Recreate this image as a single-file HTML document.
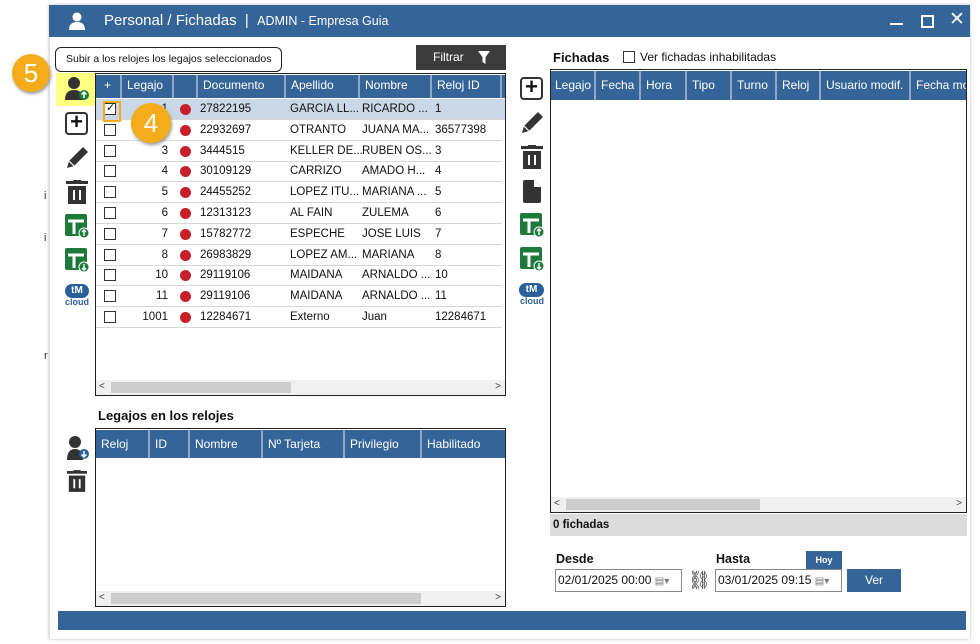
<!DOCTYPE html>
<html><head><meta charset="utf-8"><style>
*{margin:0;padding:0;box-sizing:border-box}
body{width:980px;height:644px;background:#fff;font-family:"Liberation Sans",sans-serif;font-size:12px;color:#111;position:relative;overflow:hidden}
.a{position:absolute}
.win{left:49px;top:5px;width:921px;height:634px;background:#fff;box-shadow:0 0 3px #bbb;border-left:1px solid #ddd}
.title{left:49px;top:5px;width:921px;height:32px;background:#346498;color:#fff}
.hd{background:#346498;color:#fff;height:100%;display:flex}
.hd div{border-right:2px solid #8fa9c6;padding-left:5px;line-height:21px;white-space:nowrap;overflow:hidden}
.row{position:absolute;left:0;height:21px;width:406px;border-bottom:1px solid #d8d8d8;font-size:11.5px}
.row span{position:absolute;top:4px;white-space:nowrap}
.cb{position:absolute;left:8px;top:4px;width:12px;height:12px;border:1px solid #333;background:#fff}
.dot{position:absolute;left:84px;top:5px;width:11px;height:11px;border-radius:50%;background:#c8202a}
.sb{position:absolute;height:15px;background:#f0f0f0;font-size:10px;color:#444}
.circ{border-radius:50%;background:#f5ac1b;color:#fff;font-size:26px;text-align:center;box-shadow:1px 2px 3px #999}
</style></head><body>
<div class="a" style="left:44px;top:190px;font-size:11px;color:#333">i</div>
<div class="a" style="left:44px;top:232px;font-size:11px;color:#333">i</div>
<div class="a" style="left:44px;top:350px;font-size:11px;color:#333">r</div>
<div class="a win"></div>
<div class="a title">
 <svg class="a" style="left:19px;top:7px" width="18" height="18" viewBox="0 0 18 18"><circle cx="9" cy="5" r="4.5" fill="#fff"/><path d="M1 18 Q1 10 9 10 Q17 10 17 18Z" fill="#fff"/></svg>
 <div class="a" style="left:55px;top:7px;font-size:15px">Personal / Fichadas &nbsp;|&nbsp; <span style="font-size:12.5px">ADMIN - Empresa Guia</span></div>
 <div class="a" style="left:841px;top:18px;width:13px;height:2px;background:#fff"></div>
 <div class="a" style="left:872px;top:10px;width:13px;height:13px;border:2px solid #fff"></div>
 <div class="a" style="left:900px;top:3px;font-size:19px;color:#fff">✕</div>
</div>
<div class="a" style="left:55px;top:47px;width:227px;height:25px;border:1px solid #222;border-radius:6px;background:#fff;font-size:10.5px;line-height:23px;padding-left:10px;white-space:nowrap;overflow:hidden">Subir a los relojes los legajos seleccionados</div>
<div class="a" style="left:416px;top:45px;width:90px;height:25px;background:#3c3c3c;color:#fff;font-size:12px;line-height:25px;padding-left:17px">Filtrar <svg style="position:absolute;left:62px;top:6px" width="12" height="13" viewBox="0 0 12 13"><path d="M0 0H12L7.5 6V13L4.5 11V6Z" fill="#fff"/></svg></div>
<div class="a circ" style="left:12px;top:54px;width:38px;height:38px;line-height:38px">5</div>
<div class="a" style="left:56px;top:73px;width:42px;height:33px;background:#ffff80"></div>
<svg class="a" style="left:64px;top:74px" width="26" height="28" viewBox="0 0 26 28"><circle cx="10" cy="9" r="6" fill="#333"/><path d="M1 26 Q1 16 10 16 Q19 16 19 26Z" fill="#333"/><circle cx="20" cy="21" r="5" fill="#1e7a3a"/><path d="M20 24v-6M17.5 20.5l2.5-2.5 2.5 2.5" stroke="#fff" stroke-width="1.5" fill="none"/></svg>
<div class="a" style="left:65px;top:112px;width:23px;height:23px;border:2.5px solid #333;border-radius:4px;font-size:22px;line-height:16px;text-align:center;font-weight:bold">+</div>
<svg class="a" style="left:64px;top:145px" width="26" height="26" viewBox="0 0 26 26"><path d="M3 23l2-7 14-14 5 5-14 14z" fill="#333"/><path d="M5 16l5 5" stroke="#fff" stroke-width="1.2"/></svg>
<svg class="a" style="left:66px;top:180px" width="22" height="24" viewBox="0 0 22 24"><rect x="0" y="1" width="22" height="3" fill="#333"/><rect x="7" y="0" width="8" height="2" fill="#333"/><rect x="2" y="6" width="18" height="18" fill="#333"/><rect x="7" y="10" width="2" height="10" fill="#fff"/><rect x="13" y="10" width="2" height="10" fill="#fff"/></svg>
<svg class="a" style="left:65px;top:214px" width="25" height="25" viewBox="0 0 25 25"><rect x="0" y="0" width="22" height="22" rx="2" fill="#1e7a3a"/><path d="M3 7H19M9 7V20" stroke="#fff" stroke-width="3"/><circle cx="19" cy="19" r="5.5" fill="#fff"/><circle cx="19" cy="19" r="4.5" fill="#1e7a3a"/><path d="M19 22v-6M17 18l2-2 2 2" stroke="#fff" stroke-width="1.4" fill="none"/></svg>
<svg class="a" style="left:65px;top:248px" width="25" height="25" viewBox="0 0 25 25"><rect x="0" y="0" width="22" height="22" rx="2" fill="#1e7a3a"/><path d="M3 7H19M9 7V20" stroke="#fff" stroke-width="3"/><circle cx="19" cy="19" r="5.5" fill="#fff"/><circle cx="19" cy="19" r="4.5" fill="#1e7a3a"/><path d="M19 16v6M17 20l2 2 2-2" stroke="#fff" stroke-width="1.4" fill="none"/></svg>
<div class="a" style="left:65px;top:284px;width:24px;height:14px;border-radius:7px;background:#2a5f99;color:#fff;font-size:10px;font-weight:bold;text-align:center;line-height:14px">tM</div>
<div class="a" style="left:65px;top:297px;font-size:9px;font-weight:bold;color:#2a5f99">cloud</div>
<div class="a" style="left:95px;top:73px;width:411px;height:323px;border:1px solid #222;background:#fff;overflow:hidden">
 <div class="a" style="left:0;top:1px;width:409px;height:23px"><div class="hd">
  <div style="width:26px;padding-left:8px">+</div><div style="width:52px">Legajo</div><div style="width:24px"></div><div style="width:88px">Documento</div><div style="width:74px">Apellido</div><div style="width:72px">Nombre</div><div style="width:70px">Reloj ID</div></div></div>
 <div class="a" style="left:0;top:25px;width:410px;height:21px;background:#c9d7e6"></div>
</div>
<div class="a" style="left:96px;top:99px;width:409px;height:240px" id="rows"></div>
<div class="sb" style="left:96px;top:380px;width:409px"><span style="position:absolute;left:3px;top:1px">&lt;</span><div style="position:absolute;left:15px;top:2px;width:180px;height:11px;background:#cdcdcd"></div><span style="position:absolute;right:4px;top:1px">&gt;</span></div>
<div class="a" style="left:103px;top:101px;width:18px;height:21px;border:2px solid #f5ac1b"></div>
<div class="a circ" style="left:131px;top:103px;width:40px;height:40px;line-height:40px">4</div>
<div class="a" style="left:98px;top:408px;font-size:13px;font-weight:bold">Legajos en los relojes</div>
<svg class="a" style="left:66px;top:435px" width="24" height="26" viewBox="0 0 24 26"><circle cx="9" cy="7" r="6" fill="#333"/><path d="M1 25 Q1 14 9 14 Q17 14 17 25Z" fill="#333"/><circle cx="18" cy="19" r="5" fill="#2a5f99"/><path d="M18 16v6M15.5 19.5l2.5 2.5 2.5-2.5" stroke="#fff" stroke-width="1.5" fill="none"/></svg>
<svg class="a" style="left:67px;top:469px" width="20" height="24" viewBox="0 0 22 24"><rect x="0" y="1" width="22" height="3" fill="#333"/><rect x="7" y="0" width="8" height="2" fill="#333"/><rect x="2" y="6" width="18" height="18" fill="#333"/><rect x="7" y="10" width="2" height="10" fill="#fff"/><rect x="13" y="10" width="2" height="10" fill="#fff"/></svg>
<div class="a" style="left:95px;top:428px;width:411px;height:179px;border:1px solid #222;background:#fff">
 <div class="a" style="left:0;top:1px;width:409px;height:28px"><div class="hd" style="line-height:28px">
  <div style="width:54px;line-height:28px">Reloj</div><div style="width:40px;line-height:28px">ID</div><div style="width:73px;line-height:28px">Nombre</div><div style="width:82px;line-height:28px">Nº Tarjeta</div><div style="width:77px;line-height:28px">Privilegio</div><div style="width:83px;line-height:28px;border:0">Habilitado</div></div></div>
 <div class="sb" style="left:0;top:162px;width:409px"><span style="position:absolute;left:3px;top:1px">&lt;</span><div style="position:absolute;left:15px;top:2px;width:310px;height:11px;background:#cdcdcd"></div><span style="position:absolute;right:4px;top:1px">&gt;</span></div>
</div>
<div class="a" style="left:553px;top:50px;font-size:13px;font-weight:bold">Fichadas</div>
<div class="a" style="left:623px;top:51px;width:12px;height:12px;border:1px solid #333"></div>
<div class="a" style="left:640px;top:50px;font-size:12px">Ver fichadas inhabilitadas</div>
<div class="a" style="left:520px;top:77px;width:23px;height:23px;border:2.5px solid #333;border-radius:4px;font-size:22px;line-height:16px;text-align:center;font-weight:bold">+</div>
<svg class="a" style="left:519px;top:110px" width="26" height="26" viewBox="0 0 26 26"><path d="M3 23l2-7 14-14 5 5-14 14z" fill="#333"/><path d="M5 16l5 5" stroke="#fff" stroke-width="1.2"/></svg>
<svg class="a" style="left:521px;top:145px" width="22" height="24" viewBox="0 0 22 24"><rect x="0" y="1" width="22" height="3" fill="#333"/><rect x="7" y="0" width="8" height="2" fill="#333"/><rect x="2" y="6" width="18" height="18" fill="#333"/><rect x="7" y="10" width="2" height="10" fill="#fff"/><rect x="13" y="10" width="2" height="10" fill="#fff"/></svg>
<svg class="a" style="left:523px;top:180px" width="18" height="23" viewBox="0 0 18 23"><path d="M0 2Q0 0 2 0H11L18 7V21Q18 23 16 23H2Q0 23 0 21Z" fill="#333"/><path d="M11 0V7H18" fill="#fff"/></svg>
<svg class="a" style="left:520px;top:213px" width="25" height="25" viewBox="0 0 25 25"><rect x="0" y="0" width="22" height="22" rx="2" fill="#1e7a3a"/><path d="M3 7H19M9 7V20" stroke="#fff" stroke-width="3"/><circle cx="19" cy="19" r="5.5" fill="#fff"/><circle cx="19" cy="19" r="4.5" fill="#1e7a3a"/><path d="M19 22v-6M17 18l2-2 2 2" stroke="#fff" stroke-width="1.4" fill="none"/></svg>
<svg class="a" style="left:520px;top:247px" width="25" height="25" viewBox="0 0 25 25"><rect x="0" y="0" width="22" height="22" rx="2" fill="#1e7a3a"/><path d="M3 7H19M9 7V20" stroke="#fff" stroke-width="3"/><circle cx="19" cy="19" r="5.5" fill="#fff"/><circle cx="19" cy="19" r="4.5" fill="#1e7a3a"/><path d="M19 16v6M17 20l2 2 2-2" stroke="#fff" stroke-width="1.4" fill="none"/></svg>
<div class="a" style="left:519px;top:283px;width:25px;height:14px;border-radius:7px;background:#2a5f99;color:#fff;font-size:10px;font-weight:bold;text-align:center;line-height:14px">tM</div>
<div class="a" style="left:520px;top:296px;font-size:9px;font-weight:bold;color:#2a5f99">cloud</div>
<div class="a" style="left:550px;top:69px;width:417px;height:444px;border:1px solid #222;background:#fff;overflow:hidden">
 <div class="a" style="left:0;top:1px;width:420px;height:29px"><div class="hd">
  <div style="width:45px;line-height:29px;padding-left:4px">Legajo</div><div style="width:45px;line-height:29px">Fecha</div><div style="width:46px;line-height:29px">Hora</div><div style="width:45px;line-height:29px">Tipo</div><div style="width:45px;line-height:29px">Turno</div><div style="width:44px;line-height:29px">Reloj</div><div style="width:90px;line-height:29px">Usuario modif.</div><div style="width:60px;line-height:29px;border:0">Fecha mo</div></div></div>
 <div class="sb" style="left:0;top:427px;width:415px"><span style="position:absolute;left:3px;top:1px">&lt;</span><div style="position:absolute;left:15px;top:2px;width:194px;height:11px;background:#cdcdcd"></div><span style="position:absolute;right:4px;top:1px">&gt;</span></div>
</div>
<div class="a" style="left:550px;top:514px;width:417px;height:22px;background:#dcdcdc;font-weight:bold;font-size:11.5px;line-height:22px;padding-left:3px">0 fichadas</div>
<div class="a" style="left:556px;top:552px;font-weight:bold;font-size:12.5px">Desde</div>
<div class="a" style="left:716px;top:552px;font-weight:bold;font-size:12.5px">Hasta</div>
<div class="a" style="left:806px;top:551px;width:36px;height:18px;background:#346498;color:#fff;font-size:9px;font-weight:bold;text-align:center;line-height:18px">Hoy</div>
<div class="a" style="left:555px;top:569px;width:127px;height:23px;border:1px solid #888;font-size:12px;line-height:21px;padding-left:2px">02/01/2025 00:00 <span style="color:#777;font-size:10px">▤▾</span></div>
<div class="a" style="left:688px;top:570px;font-size:18px;color:#222">⛓</div>
<div class="a" style="left:715px;top:569px;width:127px;height:23px;border:1px solid #888;font-size:12px;line-height:21px;padding-left:2px">03/01/2025 09:15 <span style="color:#777;font-size:10px">▤▾</span></div>
<div class="a" style="left:847px;top:569px;width:54px;height:23px;background:#346498;color:#fff;text-align:center;line-height:23px;font-size:12px">Ver</div>
<div class="a" style="left:58px;top:611px;width:908px;height:19px;background:#346498"></div>
<script>
var d=[[1,'27822195','GARCIA LL...','RICARDO ...','1'],[2,'22932697','OTRANTO','JUANA MA...','36577398'],[3,'3444515','KELLER DE...','RUBEN OS...','3'],[4,'30109129','CARRIZO','AMADO H...','4'],[5,'24455252','LOPEZ ITU...','MARIANA ...','5'],[6,'12313123','AL FAIN','ZULEMA','6'],[7,'15782772','ESPECHE','JOSE LUIS','7'],[8,'26983829','LOPEZ AM...','MARIANA','8'],[10,'29119106','MAIDANA','ARNALDO ...','10'],[11,'29119106','MAIDANA','ARNALDO ...','11'],[1001,'12284671','Externo','Juan','12284671']];
var h='';d.forEach(function(r,i){h+='<div class="row" style="top:'+(i*20.8)+'px"><div class="cb">'+(i==0?'<span style="position:absolute;left:1px;top:-3px;font-size:11px">✓</span>':'')+'</div><span style="right:334px">'+r[0]+'</span><div class="dot"></div><span style="left:104px">'+r[1]+'</span><span style="left:194px">'+r[2]+'</span><span style="left:266px">'+r[3]+'</span><span style="left:339px">'+r[4]+'</span></div>'});
document.getElementById('rows').innerHTML=h;
</script>
</body></html>
